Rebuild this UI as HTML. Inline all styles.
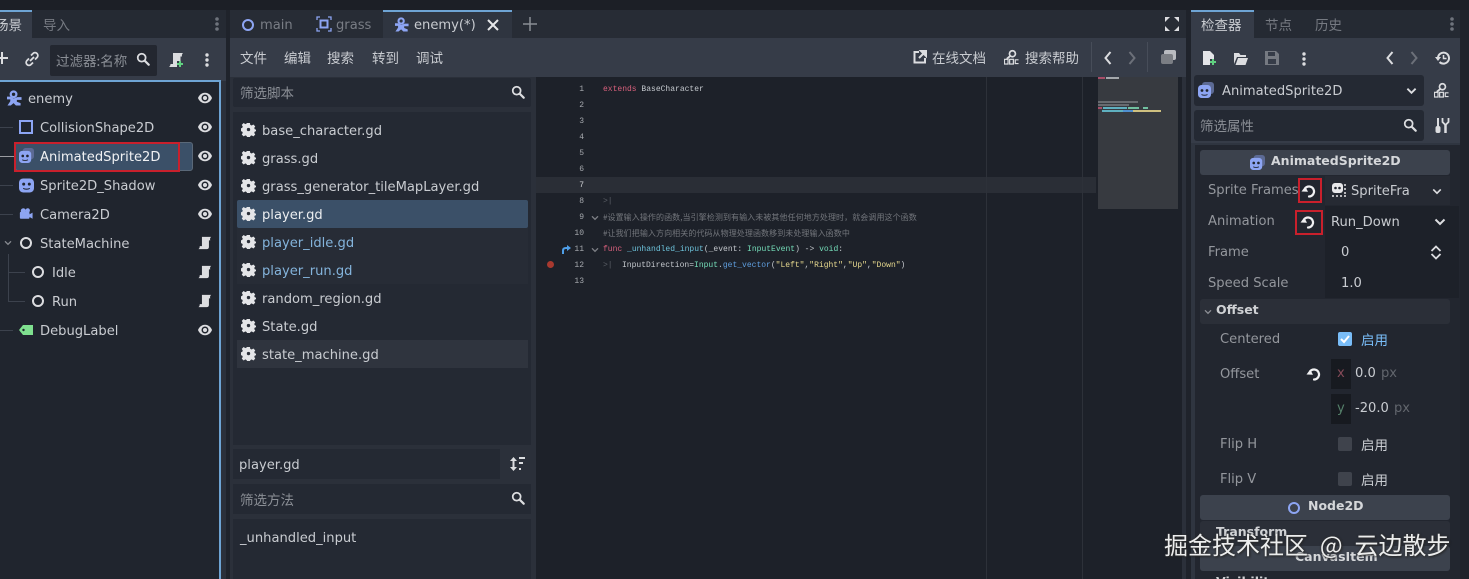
<!DOCTYPE html>
<html lang="zh"><head><meta charset="utf-8"><title>Godot</title>
<style>
html,body{margin:0;padding:0;width:1469px;height:579px;overflow:hidden;background:#1f232b}
body{position:relative;font-family:"DejaVu Sans","Noto Sans CJK SC",sans-serif;font-size:13.1px;color:#c9ccd1}
.b{position:absolute}
.t{position:absolute;white-space:nowrap;line-height:20px;height:20px;transform:translateY(2px)}
.t[style*="bold"]{transform:none}
.c{font-family:"Noto Sans CJK SC",sans-serif;font-size:13.5px;transform:translateY(-1px)}
.d{color:#8b8f96}
.code{position:absolute;white-space:pre;font-family:"Liberation Mono",monospace;font-size:8px;line-height:16px;height:16px;color:#c4c8cd;transform:translateY(1px)}
.num{position:absolute;width:20px;text-align:right;font-family:"Liberation Mono",monospace;font-size:8px;line-height:16px;color:#a5a8ad;left:564px;transform:translateY(1px)}
svg.i{position:absolute;overflow:visible}
.red{position:absolute;border:2px solid #c9202c;box-sizing:border-box}
</style></head><body>
<svg width="0" height="0" style="position:absolute">
<defs>
<symbol id="eye" viewBox="0 0 16 16"><path d="M8 2C3.500 2 1 5.500 0 8c1 2.500 3.500 6 8 6s7-3.500 8-6c-1-2.500-3.500-6-8-6z" fill="#dcdde0"/><circle cx="8" cy="8" r="4" fill="#20252e"/><circle cx="8" cy="8" r="2.300" fill="#dcdde0"/></symbol>
<symbol id="scr" viewBox="0 0 16 16"><path d="M4.500 1h10.500c-1.200 1-1.500 2.200-1 4h-1.500v7.500c0 1.500-1 2.500-2.500 2.500H.5c1-.8 1.500-1.700 1.500-3.500H4.500z" fill="#dcdde0"/></symbol>
<symbol id="gear" viewBox="0 0 16 16"><path d="M6.500 1h3l.4 2 1.500.7 1.800-1.100 2 2-1.100 1.800.7 1.500 2 .4v1.400l-2 .4-.7 1.500 1.100 1.800-2 2-1.800-1.100-1.500.7-.4 2h-3l-.4-2-1.500-.7-1.800 1.100-2-2 1.100-1.800-.7-1.500-2-.4V6.800l2-.4.7-1.500-1.100-1.800 2-2 1.800 1.100 1.500-.7z" fill="#e4e5e8"/><circle cx="8" cy="8" r="1.800" fill="#2a2f39"/></symbol>
<symbol id="search" viewBox="0 0 16 16"><circle cx="6.500" cy="6.500" r="4.500" fill="none" stroke="#dcdde0" stroke-width="2"/><path d="M10 10l4.500 4.500" stroke="#dcdde0" stroke-width="2.500" stroke-linecap="round"/></symbol>
<symbol id="bot" viewBox="0 0 16 16"><rect x="0" y="1" width="16" height="15" rx="4.500" fill="#8da5f3"/><circle cx="5" cy="7" r="1.600" fill="#20252e"/><circle cx="11" cy="7" r="1.600" fill="#20252e"/><path d="M4.500 11.500c1.800 1.300 5.200 1.300 7 0" stroke="#20252e" fill="none" stroke-width="1.100"/></symbol>
<symbol id="abot" viewBox="0 0 16 16"><rect x="4" y="0" width="12" height="12" rx="3" fill="#5c6a94"/><rect x="0" y="3" width="13" height="13" rx="3.500" fill="#8da5f3"/><circle cx="4" cy="8.500" r="1.400" fill="#20252e"/><circle cx="9" cy="8.500" r="1.400" fill="#20252e"/><path d="M3.500 12.500c1.300 1 4.700 1 6 0" stroke="#20252e" fill="none" stroke-width="1"/></symbol>
<symbol id="char" viewBox="0 0 16 16"><circle cx="7" cy="4" r="3" fill="none" stroke="#8da5f3" stroke-width="2.400"/><path d="M0 6.500h3.500L7 8.500l4-1.500h4.500v3H10.500v2l4 1.500V16H9.500L7 13.500 4 16H.5l3-4.500V9.500H0z" fill="#8da5f3"/></symbol>
<symbol id="reset" viewBox="0 0 16 16"><path d="M4 5.500A5 5 0 1 1 8 13.500" fill="none" stroke="#f0f0f2" stroke-width="2.200" stroke-linecap="round"/><path d="M.5 8.500l6.500.2-2.800-5.200z" fill="#f0f0f2"/></symbol>
<symbol id="cam" viewBox="0 0 16 16"><circle cx="5" cy="5" r="3" fill="#8da5f3"/><circle cx="10" cy="4.500" r="2.500" fill="#8da5f3"/><rect x="1" y="6" width="11" height="8" rx="1.500" fill="#8da5f3"/><path d="M12 9l3.500-2v7L12 12z" fill="#8da5f3"/></symbol>
<symbol id="doc" viewBox="0 0 16 16"><circle cx="9" cy="4.500" r="3.200" fill="none" stroke="#dcdde0" stroke-width="1.800"/><path d="M6.500 7L3 10" stroke="#dcdde0" stroke-width="2"/><rect x=".5" y="10.500" width="3.800" height="5" fill="none" stroke="#dcdde0" stroke-width="1.300"/><rect x="6" y="10.500" width="4" height="5" fill="none" stroke="#dcdde0" stroke-width="1.300"/><path d="M15.500 11h-3.500v4h3.500" fill="none" stroke="#dcdde0" stroke-width="1.300"/></symbol>
<symbol id="dots" viewBox="0 0 4 16"><circle cx="2" cy="3" r="1.700" fill="#dcdde0"/><circle cx="2" cy="8" r="1.700" fill="#dcdde0"/><circle cx="2" cy="13" r="1.700" fill="#dcdde0"/></symbol>
<symbol id="grip" viewBox="0 0 4 16"><circle cx="2" cy="3" r="1.800" fill="#6e737c"/><circle cx="2" cy="8" r="1.800" fill="#6e737c"/><circle cx="2" cy="13" r="1.800" fill="#6e737c"/></symbol>
<symbol id="lt" viewBox="0 0 10 16"><path d="M7.500 2L2.500 8l5 6" fill="none" stroke="#dcdde0" stroke-width="2"/></symbol>
<symbol id="gt" viewBox="0 0 10 16"><path d="M2.500 2l5 6-5 6" fill="none" stroke="#6c7079" stroke-width="2"/></symbol>
<symbol id="dn" viewBox="0 0 12 8"><path d="M1.500 1.500L6 6l4.500-4.500" fill="none" stroke="#dcdde0" stroke-width="2"/></symbol>
<symbol id="fnew" viewBox="0 0 16 16"><path d="M2 1h7l4 4v4H9v6H2z" fill="#e4e5e8"/><path d="M12 9v6M9 12h6" stroke="#60d080" stroke-width="2"/></symbol>
<symbol id="scrnew" viewBox="0 0 16 16"><path d="M5 1h10c-1 1-1.300 2-1 3.500h-1.500V9H9v6H1c1-.8 1.500-1.700 1.500-3H5z" fill="#dcdde0"/><path d="M12 9v6M9 12h6" stroke="#60d080" stroke-width="2"/></symbol>
</defs></svg>

<!-- top strip -->
<div class="b" style="left:0;top:0;width:1469px;height:10px;background:#1c1f26"></div>

<!-- LEFT DOCK -->
<div class="b" style="left:0;top:10px;width:226px;height:569px;background:#2b303a"></div>
<div class="b" style="left:0;top:10px;width:226px;height:28px;background:#252a33"></div>
<div class="b" style="left:0;top:10px;width:32px;height:28px;background:#363c48;border-top:2px solid #6ea4d4;box-sizing:border-box"></div>
<div class="t c" style="left:-5px;top:15px">场景</div>
<div class="t c d" style="left:43px;top:15px;color:#767a82">导入</div>
<svg class="i" style="left:215px;top:16px" width="4" height="16"><use href="#grip"/></svg>
<div class="b" style="left:0;top:38px;width:226px;height:43px;background:#363c48"></div>
<svg class="i" style="left:-4px;top:52px" width="12" height="12"><path d="M6 0v12M0 6h12" stroke="#dcdde0" stroke-width="2"/></svg>
<svg class="i" style="left:25px;top:52px" width="14" height="14" viewBox="0 0 14 14"><path d="M6 3.500l2-2a2.500 2.500 0 0 1 4 4l-2 2M8 10.500l-2 2a2.500 2.500 0 0 1-4-4l2-2M5 9l4-4" fill="none" stroke="#dcdde0" stroke-width="1.800"/></svg>
<div class="b" style="left:50px;top:45px;width:107px;height:31px;background:#232730;border-radius:2px"></div>
<div class="t c d" style="left:56px;top:51px">过滤器:名称</div>
<svg class="i" style="left:136px;top:52px" width="14" height="14"><use href="#search"/></svg>
<svg class="i" style="left:168px;top:52px" width="16" height="16"><use href="#scrnew"/></svg>
<svg class="i" style="left:205px;top:52px" width="4" height="16"><use href="#dots"/></svg>

<div class="b" style="left:0;top:80px;width:221px;height:499px;background:#20252e;border-top:2px solid #6ea4d4;border-right:2px solid #6ea4d4;box-sizing:border-box"></div>
<!-- tree lines -->
<div class="b" style="left:0;top:127px;width:13px;height:1px;background:#3c424d"></div>
<div class="b" style="left:0;top:156px;width:14px;height:1px;background:#9a9ca1"></div>
<div class="b" style="left:0;top:185px;width:13px;height:1px;background:#3c424d"></div>
<div class="b" style="left:0;top:214px;width:13px;height:1px;background:#3c424d"></div>
<div class="b" style="left:0;top:330px;width:13px;height:1px;background:#3c424d"></div>
<div class="b" style="left:8px;top:254px;width:1px;height:47px;background:#3c424d"></div>
<div class="b" style="left:8px;top:272px;width:17px;height:1px;background:#3c424d"></div>
<div class="b" style="left:8px;top:301px;width:17px;height:1px;background:#3c424d"></div>

<div class="b" style="left:15px;top:142px;width:178px;height:29px;background:#3b5068;border:1px solid #5a6878;border-radius:3px;box-sizing:border-box"></div>

<svg class="i" style="left:7px;top:90px" width="15" height="16"><use href="#char"/></svg>
<div class="t" style="left:28px;top:88px">enemy</div>
<div class="b" style="left:19px;top:120px;width:14px;height:14px;border:2px solid #8da5f3;box-sizing:border-box"></div>
<div class="t" style="left:40px;top:117px">CollisionShape2D</div>
<svg class="i" style="left:19px;top:148px" width="15" height="15"><use href="#abot"/></svg>
<div class="t" style="left:40px;top:146px;color:#f0f1f3">AnimatedSprite2D</div>
<svg class="i" style="left:19px;top:177px" width="15" height="16"><use href="#bot"/></svg>
<div class="t" style="left:40px;top:175px">Sprite2D_Shadow</div>
<svg class="i" style="left:19px;top:206px" width="14" height="15"><use href="#cam"/></svg>
<div class="t" style="left:40px;top:204px">Camera2D</div>
<svg class="i" style="left:4px;top:240px;opacity:.55" width="8" height="6"><use href="#dn"/></svg>
<div class="b" style="left:20px;top:237px;width:12px;height:12px;border:2px solid #dcdde0;border-radius:50%;box-sizing:border-box"></div>
<div class="t" style="left:40px;top:233px">StateMachine</div>
<div class="b" style="left:32px;top:266px;width:12px;height:12px;border:2px solid #dcdde0;border-radius:50%;box-sizing:border-box"></div>
<div class="t" style="left:52px;top:262px">Idle</div>
<div class="b" style="left:32px;top:295px;width:12px;height:12px;border:2px solid #dcdde0;border-radius:50%;box-sizing:border-box"></div>
<div class="t" style="left:52px;top:291px">Run</div>
<svg class="i" style="left:19px;top:325px" width="14" height="10" viewBox="0 0 14 10"><path d="M0 5l4-5h10v10H4z" fill="#7fe08f"/><circle cx="4.500" cy="5" r="1.200" fill="#20252e"/></svg>
<div class="t" style="left:40px;top:320px">DebugLabel</div>
<svg class="i" style="left:198px;top:91px" width="14" height="14"><use href="#eye"/></svg>
<svg class="i" style="left:198px;top:120px" width="14" height="14"><use href="#eye"/></svg>
<svg class="i" style="left:198px;top:149px" width="14" height="14"><use href="#eye"/></svg>
<svg class="i" style="left:198px;top:178px" width="14" height="14"><use href="#eye"/></svg>
<svg class="i" style="left:198px;top:207px" width="14" height="14"><use href="#eye"/></svg>
<svg class="i" style="left:198px;top:236px" width="14" height="14"><use href="#scr"/></svg>
<svg class="i" style="left:198px;top:265px" width="14" height="14"><use href="#scr"/></svg>
<svg class="i" style="left:198px;top:294px" width="14" height="14"><use href="#scr"/></svg>
<svg class="i" style="left:198px;top:323px" width="14" height="14"><use href="#eye"/></svg>
<div class="red" style="left:14px;top:142px;width:166px;height:30px"></div>

<!-- CENTER -->
<div class="b" style="left:230px;top:10px;width:956px;height:569px;background:#2b303a"></div>
<div class="b" style="left:230px;top:10px;width:956px;height:28px;background:#272c35"></div>
<div class="b" style="left:383px;top:10px;width:129px;height:28px;background:#2f3540;border-top:2px solid #6ea4d4;box-sizing:border-box"></div>
<div class="b" style="left:242px;top:19px;width:12px;height:12px;border:2px solid #8da5f3;border-radius:50%;box-sizing:border-box"></div>
<div class="t d" style="left:260px;top:14px;color:#797d85">main</div>
<svg class="i" style="left:317px;top:17px" width="14" height="14" viewBox="0 0 14 14"><rect x="3.500" y="3.500" width="7" height="7" fill="none" stroke="#8da5f3" stroke-width="2"/><path d="M0 3V0h3M11 0h3v3M14 11v3h-3M3 14H0v-3" fill="none" stroke="#8da5f3" stroke-width="1.300"/></svg>
<div class="t d" style="left:336px;top:14px;color:#797d85">grass</div>
<svg class="i" style="left:395px;top:17px" width="14" height="15"><use href="#char"/></svg>
<div class="t" style="left:414px;top:14px">enemy(*)</div>
<svg class="i" style="left:487px;top:19px" width="12" height="12"><path d="M1 1l10 10M11 1L1 11" stroke="#e6e7e9" stroke-width="2"/></svg>
<svg class="i" style="left:523px;top:17px" width="14" height="14"><path d="M7 0v14M0 7h14" stroke="#8a8e95" stroke-width="1.500"/></svg>
<svg class="i" style="left:1165px;top:17px" width="14" height="14" viewBox="0 0 14 14"><path d="M0 0h5L0 5zM14 0v5L9 0zM0 14V9l5 5zM14 14H9l5-5z" fill="#dcdde0"/></svg>

<div class="b" style="left:230px;top:38px;width:956px;height:39px;background:#363c48"></div>
<div class="t c" style="left:240px;top:48px">文件</div>
<div class="t c" style="left:284px;top:48px">编辑</div>
<div class="t c" style="left:327px;top:48px">搜索</div>
<div class="t c" style="left:372px;top:48px">转到</div>
<div class="t c" style="left:416px;top:48px">调试</div>
<svg class="i" style="left:913px;top:50px" width="14" height="14" viewBox="0 0 14 14"><path d="M6 2H1.500v10.500H12V8" fill="none" stroke="#dcdde0" stroke-width="2"/><path d="M8 1h5v5zM11 3L6 8" fill="#dcdde0" stroke="#dcdde0" stroke-width="2"/></svg>
<div class="t c" style="left:932px;top:48px">在线文档</div>
<svg class="i" style="left:1004px;top:49px" width="15" height="16"><use href="#doc"/></svg>
<div class="t c" style="left:1025px;top:48px">搜索帮助</div>
<div class="b" style="left:1091px;top:42px;width:1px;height:30px;background:#474d59"></div>
<div class="b" style="left:1147px;top:42px;width:1px;height:30px;background:#474d59"></div>
<svg class="i" style="left:1103px;top:50px" width="10" height="16"><use href="#lt"/></svg>
<svg class="i" style="left:1127px;top:50px" width="10" height="16"><use href="#gt"/></svg>
<svg class="i" style="left:1161px;top:50px" width="15" height="14" viewBox="0 0 15 14"><rect x="3" y="0" width="12" height="10" rx="2" fill="#b9bbc0"/><rect x="0" y="4" width="12" height="10" rx="2" fill="#7b7e84"/></svg>

<!-- script filter -->
<div class="b" style="left:233px;top:78px;width:298px;height:29px;background:#242933;border-radius:2px"></div>
<div class="t c d" style="left:240px;top:83px">筛选脚本</div>
<svg class="i" style="left:511px;top:85px" width="14" height="14"><use href="#search"/></svg>
<div class="b" style="left:233px;top:112px;width:298px;height:333px;background:#242933"></div>
<div class="b" style="left:237px;top:200px;width:291px;height:28px;background:#3b5068;border-radius:2px"></div>
<div class="b" style="left:237px;top:228px;width:291px;height:28px;background:#272c36"></div>
<div class="b" style="left:237px;top:256px;width:291px;height:28px;background:#272c36"></div>
<div class="b" style="left:237px;top:340px;width:291px;height:28px;background:#2f343e"></div>
<svg class="i" style="left:241px;top:122px" width="15" height="15"><use href="#gear"/></svg>
<div class="t" style="left:262px;top:120px">base_character.gd</div>
<svg class="i" style="left:241px;top:150px" width="15" height="15"><use href="#gear"/></svg>
<div class="t" style="left:262px;top:148px">grass.gd</div>
<svg class="i" style="left:241px;top:178px" width="15" height="15"><use href="#gear"/></svg>
<div class="t" style="left:262px;top:176px">grass_generator_tileMapLayer.gd</div>
<svg class="i" style="left:241px;top:206px" width="15" height="15"><use href="#gear"/></svg>
<div class="t" style="left:262px;top:204px;color:#eceef0">player.gd</div>
<svg class="i" style="left:241px;top:234px" width="15" height="15"><use href="#gear"/></svg>
<div class="t" style="left:262px;top:232px;color:#84b4dc">player_idle.gd</div>
<svg class="i" style="left:241px;top:262px" width="15" height="15"><use href="#gear"/></svg>
<div class="t" style="left:262px;top:260px;color:#84b4dc">player_run.gd</div>
<svg class="i" style="left:241px;top:290px" width="15" height="15"><use href="#gear"/></svg>
<div class="t" style="left:262px;top:288px">random_region.gd</div>
<svg class="i" style="left:241px;top:318px" width="15" height="15"><use href="#gear"/></svg>
<div class="t" style="left:262px;top:316px">State.gd</div>
<svg class="i" style="left:241px;top:346px" width="15" height="15"><use href="#gear"/></svg>
<div class="t" style="left:262px;top:344px">state_machine.gd</div>

<div class="b" style="left:233px;top:449px;width:267px;height:30px;background:#242933"></div>
<div class="t" style="left:239px;top:454px">player.gd</div>
<svg class="i" style="left:510px;top:457px" width="15" height="14" viewBox="0 0 15 14"><path d="M3.500 2v10" stroke="#dcdde0" stroke-width="2"/><path d="M0 4l3.500-4L7 4zM0 10l3.500 4L7 10z" fill="#dcdde0"/><path d="M9 1h6M9 6h4M9 12h2" stroke="#dcdde0" stroke-width="2"/></svg>
<div class="b" style="left:233px;top:484px;width:298px;height:30px;background:#242933"></div>
<div class="t c d" style="left:240px;top:490px">筛选方法</div>
<svg class="i" style="left:511px;top:491px" width="14" height="14"><use href="#search"/></svg>
<div class="b" style="left:233px;top:519px;width:298px;height:60px;background:#242933"></div>
<div class="t" style="left:240px;top:527px">_unhandled_input</div>

<!-- code -->
<div class="b" style="left:536px;top:77px;width:646px;height:502px;background:#1d2129"></div>
<div class="b" style="left:536px;top:177px;width:560px;height:16px;background:#2a2e36"></div>
<div class="b" style="left:986px;top:77px;width:1px;height:502px;background:#2d3139"></div>
<div class="b" style="left:1082px;top:77px;width:1px;height:502px;background:#2d3139"></div>
<div class="b" style="left:1098px;top:77px;width:80px;height:132px;background:#373a40"></div>
<div class="b" style="left:1098px;top:77px;width:7px;height:2px;background:#a84d68"></div>
<div class="b" style="left:1106px;top:77px;width:13px;height:2px;background:#a4a8ac"></div>
<div class="b" style="left:1098px;top:101px;width:40px;height:2px;background:#686b70"></div>
<div class="b" style="left:1098px;top:104px;width:31px;height:2px;background:#686b70"></div>
<div class="b" style="left:1098px;top:107px;width:4px;height:2px;background:#a84d68"></div>
<div class="b" style="left:1103px;top:107px;width:24px;height:2px;background:#5fb0c0"></div>
<div class="b" style="left:1128px;top:107px;width:11px;height:2px;background:#70c0a0"></div>
<div class="b" style="left:1143px;top:107px;width:5px;height:2px;background:#70c0a0"></div>
<div class="b" style="left:1102px;top:110px;width:21px;height:2px;background:#5fb0c0"></div>
<div class="b" style="left:1123px;top:110px;width:10px;height:2px;background:#4f8fd0"></div>
<div class="b" style="left:1133px;top:110px;width:28px;height:2px;background:#cfc080"></div>

<div class="num" style="top:81px">1</div><div class="num" style="top:97px">2</div><div class="num" style="top:113px">3</div><div class="num" style="top:129px">4</div><div class="num" style="top:145px">5</div><div class="num" style="top:161px">6</div><div class="num" style="top:177px;color:#d0d2d5">7</div><div class="num" style="top:193px">8</div><div class="num" style="top:209px">9</div><div class="num" style="top:225px">10</div><div class="num" style="top:241px">11</div><div class="num" style="top:257px">12</div><div class="num" style="top:273px">13</div>
<div class="code" style="left:603px;top:81px"><span style="color:#d8607c">extends</span> BaseCharacter</div>
<div class="code" style="left:603px;top:193px;color:#5a5e66">&gt;|</div>
<svg class="i" style="left:591px;top:215px;opacity:.5" width="8" height="6"><use href="#dn"/></svg>
<div class="code" style="left:603px;top:209px;color:#73767c;font-family:'Noto Sans CJK SC',sans-serif;letter-spacing:.08px">#设置输入操作的函数,当引擎检测到有输入未被其他任何地方处理时，就会调用这个函数</div>
<div class="code" style="left:603px;top:225px;color:#73767c;font-family:'Noto Sans CJK SC',sans-serif;letter-spacing:.08px">#让我们把输入方向相关的代码从物理处理函数移到未处理输入函数中</div>
<svg class="i" style="left:591px;top:247px;opacity:.5" width="8" height="6"><use href="#dn"/></svg>
<svg class="i" style="left:562px;top:245px" width="9" height="9" viewBox="0 0 9 9"><path d="M1 9V5.500C1 4 2 3 4 3h2" fill="none" stroke="#4f9fe8" stroke-width="2"/><path d="M5 0l4 3-4 3z" fill="#4f9fe8"/></svg>
<div class="code" style="left:603px;top:241px"><span style="color:#d8607c">func</span> <span style="color:#6cc0d8">_unhandled_input</span>(_event: <span style="color:#74dcb8">InputEvent</span>) -&gt; <span style="color:#74dcb8">void</span>:</div>
<div class="b" style="left:547px;top:261px;width:7px;height:7px;border-radius:50%;background:#a8392f"></div>
<div class="code" style="left:603px;top:257px;color:#5a5e66">&gt;|</div>
<div class="code" style="left:622px;top:257px">InputDirection=<span style="color:#74dcb8">Input</span>.<span style="color:#5f9fe0">get_vector</span>(<span style="color:#e6d88e">"Left"</span>,<span style="color:#e6d88e">"Right"</span>,<span style="color:#e6d88e">"Up"</span>,<span style="color:#e6d88e">"Down"</span>)</div>

<!-- INSPECTOR -->
<div class="b" style="left:1191px;top:10px;width:269px;height:569px;background:#2f3540"></div>
<div class="b" style="left:1191px;top:10px;width:269px;height:28px;background:#252a33"></div>
<div class="b" style="left:1191px;top:10px;width:63px;height:28px;background:#363c48;border-top:2px solid #6ea4d4;box-sizing:border-box"></div>
<div class="t c" style="left:1201px;top:15px">检查器</div>
<div class="t c" style="left:1265px;top:15px;color:#767a82">节点</div>
<div class="t c" style="left:1315px;top:15px;color:#767a82">历史</div>
<svg class="i" style="left:1450px;top:16px" width="4" height="16"><use href="#grip"/></svg>
<div class="b" style="left:1191px;top:38px;width:269px;height:35px;background:#363c48"></div>
<div class="b" style="left:1191px;top:73px;width:269px;height:70px;background:#363c48"></div>
<svg class="i" style="left:1201px;top:50px" width="16" height="16"><use href="#fnew"/></svg>
<svg class="i" style="left:1233px;top:52px" width="15" height="13" viewBox="0 0 15 13"><path d="M1 1h5l1.500 2H13v2H4L1 12z" fill="#dcdde0"/><path d="M2.500 13L5 6h10l-2.500 7z" fill="#dcdde0"/></svg>
<svg class="i" style="left:1265px;top:51px" width="14" height="14" viewBox="0 0 14 14"><path d="M0 0h11l3 3v11H0zM3 1v4h7V1zM3 8v5h8V8z" fill="#767a82" fill-rule="evenodd"/></svg>
<svg class="i" style="left:1302px;top:51px" width="4" height="16"><use href="#dots"/></svg>
<svg class="i" style="left:1385px;top:50px" width="10" height="16"><use href="#lt"/></svg>
<svg class="i" style="left:1409px;top:50px" width="10" height="16"><use href="#gt"/></svg>
<svg class="i" style="left:1435px;top:51px" width="15" height="14" viewBox="0 0 15 14"><path d="M3 7a5.500 5.500 0 1 1 1.600 4" fill="none" stroke="#dcdde0" stroke-width="2"/><path d="M0 6h6L3 10z" fill="#dcdde0"/><path d="M8.500 4v3.500h3" fill="none" stroke="#dcdde0" stroke-width="1.500"/></svg>

<div class="b" style="left:1194px;top:75px;width:230px;height:31px;background:#242933;border-radius:3px"></div>
<svg class="i" style="left:1198px;top:82px" width="16" height="16"><use href="#abot"/></svg>
<div class="t" style="left:1222px;top:80px">AnimatedSprite2D</div>
<svg class="i" style="left:1406px;top:87px" width="11" height="8"><use href="#dn"/></svg>
<svg class="i" style="left:1434px;top:82px" width="15" height="16"><use href="#doc"/></svg>
<div class="b" style="left:1194px;top:110px;width:230px;height:31px;background:#242933;border-radius:3px"></div>
<div class="t c d" style="left:1200px;top:116px">筛选属性</div>
<svg class="i" style="left:1403px;top:118px" width="14" height="14"><use href="#search"/></svg>
<svg class="i" style="left:1435px;top:118px" width="14" height="15" viewBox="0 0 14 15"><path d="M3 0v9" stroke="#dcdde0" stroke-width="2"/><rect x="0.500" y="8" width="5" height="7" rx="2" fill="#dcdde0"/><path d="M10.500 7v8" stroke="#dcdde0" stroke-width="2.500"/><path d="M7.500 0v4l3 3 3-3V0" fill="none" stroke="#dcdde0" stroke-width="1.800"/></svg>

<div class="b" style="left:1195px;top:145px;width:265px;height:434px;background:#22262f"></div>
<div class="b" style="left:1200px;top:150px;width:250px;height:25px;background:#3c424d;border-radius:3px"></div>
<svg class="i" style="left:1250px;top:155px" width="15" height="15"><use href="#abot"/></svg>
<div class="t" style="left:1271px;top:151px;font-weight:bold;font-size:12.500px;color:#d5d7da">AnimatedSprite2D</div>

<div class="t d" style="left:1208px;top:179px;color:#94979d">Sprite Frames</div>
<svg class="i" style="left:1301px;top:183px" width="16" height="16"><use href="#reset"/></svg>
<div class="b" style="left:1325px;top:176px;width:125px;height:29px;background:#262a33"></div>
<svg class="i" style="left:1332px;top:183px" width="15" height="15" viewBox="0 0 15 15"><rect x="0" y="0" width="11" height="10" rx="3" fill="#e8e8ea"/><circle cx="3.500" cy="5" r="1.300" fill="#22262f"/><circle cx="7.500" cy="5" r="1.300" fill="#22262f"/><path d="M13 1v2M13 5v2M13 9v2M0 13h2M4 13h2M8 13h2M12 13h2" stroke="#e8e8ea" stroke-width="1.500"/></svg>
<div class="t" style="left:1351px;top:180px">SpriteFra</div>
<svg class="i" style="left:1432px;top:188px" width="10" height="7"><use href="#dn"/></svg>
<div class="t d" style="left:1208px;top:210px;color:#94979d">Animation</div>
<svg class="i" style="left:1300px;top:214px" width="16" height="16"><use href="#reset"/></svg>
<div class="b" style="left:1325px;top:206px;width:134px;height:92px;background:#1d2129"></div>
<div class="t" style="left:1331px;top:211px">Run_Down</div>
<svg class="i" style="left:1434px;top:218px" width="12" height="8"><use href="#dn"/></svg>
<div class="t d" style="left:1208px;top:241px;color:#94979d">Frame</div>
<div class="t" style="left:1341px;top:241px">0</div>
<svg class="i" style="left:1430px;top:245px" width="12" height="15" viewBox="0 0 12 15"><path d="M1.500 6L6 1.500 10.500 6M1.500 9L6 13.500 10.500 9" fill="none" stroke="#dcdde0" stroke-width="1.800"/></svg>
<div class="t d" style="left:1208px;top:272px;color:#94979d">Speed Scale</div>
<div class="t" style="left:1341px;top:272px">1.0</div>

<div class="b" style="left:1200px;top:299px;width:250px;height:25px;background:#2b2f38;border-radius:3px"></div>
<svg class="i" style="left:1204px;top:309px;opacity:.55" width="8" height="6"><use href="#dn"/></svg>
<div class="t" style="left:1216px;top:300px;font-weight:bold;font-size:12.500px;color:#d0d2d5">Offset</div>
<div class="t d" style="left:1220px;top:328px;color:#94979d">Centered</div>
<div class="b" style="left:1338px;top:332px;width:14px;height:14px;background:#79bdf8;border-radius:2px"></div>
<svg class="i" style="left:1338px;top:332px" width="14" height="14"><path d="M3 7l3 3 5-6" fill="none" stroke="#fff" stroke-width="2"/></svg>
<div class="t c" style="left:1361px;top:330px;color:#79bdf8">启用</div>
<div class="t d" style="left:1220px;top:363px;color:#94979d">Offset</div>
<svg class="i" style="left:1306px;top:366px" width="16" height="16"><use href="#reset"/></svg>
<div class="b" style="left:1331px;top:359px;width:20px;height:30px;background:#171a20"></div>
<div class="t" style="left:1337px;top:362px;color:#854a58">x</div>
<div class="t" style="left:1355px;top:362px">0.0</div>
<div class="t" style="left:1381px;top:362px;color:#62666d">px</div>
<div class="b" style="left:1331px;top:394px;width:20px;height:30px;background:#171a20"></div>
<div class="t" style="left:1337px;top:397px;color:#55806a">y</div>
<div class="t" style="left:1355px;top:397px">-20.0</div>
<div class="t" style="left:1394px;top:397px;color:#62666d">px</div>
<div class="t d" style="left:1220px;top:433px;color:#94979d">Flip H</div>
<div class="b" style="left:1338px;top:437px;width:14px;height:14px;background:#3f434c;border-radius:2px"></div>
<div class="t c" style="left:1361px;top:435px">启用</div>
<div class="t d" style="left:1220px;top:468px;color:#94979d">Flip V</div>
<div class="b" style="left:1338px;top:472px;width:14px;height:14px;background:#3f434c;border-radius:2px"></div>
<div class="t c" style="left:1361px;top:470px">启用</div>
<div class="b" style="left:1200px;top:495px;width:250px;height:25px;background:#3c424d;border-radius:3px"></div>
<div class="b" style="left:1288px;top:502px;width:12px;height:12px;border:2px solid #8da5f3;border-radius:50%;box-sizing:border-box"></div>
<div class="t" style="left:1308px;top:496px;font-weight:bold;font-size:12.500px;color:#d5d7da">Node2D</div>
<div class="b" style="left:1200px;top:521px;width:250px;height:25px;background:#2b2f38;border-radius:3px"></div>
<div class="t" style="left:1216px;top:522px;font-weight:bold;font-size:12.500px;color:#d0d2d5">Transform</div>
<div class="b" style="left:1200px;top:546px;width:250px;height:25px;background:#3c424d;border-radius:3px"></div>
<div class="t" style="left:1295px;top:547px;font-weight:bold;font-size:12.500px;color:#d5d7da">CanvasItem</div>
<div class="t" style="left:1216px;top:572px;font-weight:bold;font-size:12.500px;color:#d0d2d5">Visibility</div>

<div class="red" style="left:1298px;top:178px;width:24px;height:25px"></div>
<div class="red" style="left:1295px;top:210px;width:28px;height:25px"></div>

<!-- watermark -->
<div class="t" style="left:1164px;top:528px;height:32px;line-height:32px;transform:none;word-spacing:6.500px;font-family:'Noto Sans CJK SC',sans-serif;font-size:24px;color:#eceded;text-shadow:0 0 2px #333,1px 1px 2px #222">掘金技术社区 @ 云边散步</div>
</body></html>
